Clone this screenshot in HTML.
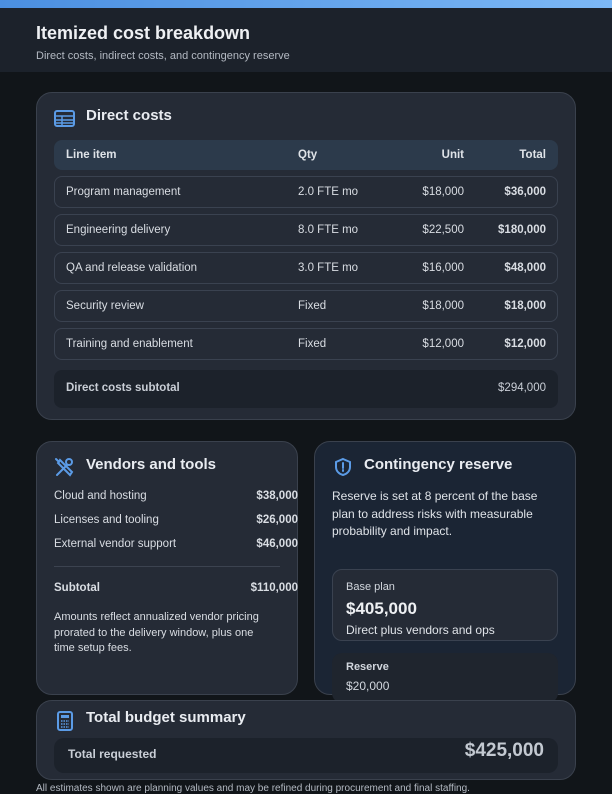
<!DOCTYPE html>
<html><head><style>
*{box-sizing:border-box;margin:0;padding:0}
body{width:612px;height:792px;overflow:hidden;background:#111519;font-family:"Liberation Sans",sans-serif;color:#e6e9ee;position:relative}
.a{position:absolute}
.card{position:absolute;background:#252b36;border:1px solid #3a414d;border-radius:16px}
.h{font-weight:bold;font-size:15px;color:#e9ecf1}
.row{position:absolute;left:54px;width:504px;height:32px;border:1px solid #3a4250;border-radius:8px;font-size:11.5px;color:#d9dde3}
.row span{position:absolute;top:9px}
.c1{left:11px}.c2{left:243px}.c3{right:93px}.c4{right:11px;font-weight:bold}
.vl{position:absolute;left:54px;font-size:11.5px;color:#d9dde3}
.vr{position:absolute;right:314px;font-size:11.5px;font-weight:bold;color:#d9dde3}
</style></head><body>
<div class="a" style="left:0;top:0;width:612px;height:8px;background:linear-gradient(90deg,#4b8fe0,#7cb8f6)"></div>
<div class="a" style="left:0;top:8px;width:612px;height:64px;background:#1c222b"></div>
<div class="a" style="left:36px;top:23px;font-size:18px;font-weight:bold;color:#eef0f3">Itemized cost breakdown</div>
<div class="a" style="left:36px;top:50px;font-size:11px;color:#b4bac3">Direct costs, indirect costs, and contingency reserve</div>

<div class="card" style="left:36px;top:92px;width:540px;height:328px"></div>
<svg class="a" style="left:54px;top:110px" width="21" height="17" viewBox="0 0 21 17"><rect x="1" y="1" width="19" height="15" rx="2" fill="none" stroke="#5b9be6" stroke-width="2"/><path d="M1 6H20M1 10H20M1 13H20M8 6V16" stroke="#5b9be6" stroke-width="1.5"/></svg>
<div class="a h" style="left:86px;top:107px">Direct costs</div>
<div class="a" style="left:54px;top:140px;width:504px;height:30px;background:#2c3a4b;border-radius:8px;font-size:11.5px;font-weight:bold;color:#dfe3e8">
<span class="a" style="left:12px;top:9px">Line item</span><span class="a" style="left:244px;top:9px">Qty</span><span class="a" style="right:94px;top:9px">Unit</span><span class="a" style="right:12px;top:9px">Total</span></div>
<div class="row" style="top:176px"><span class="c1">Program management</span><span class="c2">2.0 FTE mo</span><span class="c3">$18,000</span><span class="c4">$36,000</span></div>
<div class="row" style="top:214px"><span class="c1">Engineering delivery</span><span class="c2">8.0 FTE mo</span><span class="c3">$22,500</span><span class="c4">$180,000</span></div>
<div class="row" style="top:252px"><span class="c1">QA and release validation</span><span class="c2">3.0 FTE mo</span><span class="c3">$16,000</span><span class="c4">$48,000</span></div>
<div class="row" style="top:290px"><span class="c1">Security review</span><span class="c2">Fixed</span><span class="c3">$18,000</span><span class="c4">$18,000</span></div>
<div class="row" style="top:328px"><span class="c1">Training and enablement</span><span class="c2">Fixed</span><span class="c3">$12,000</span><span class="c4">$12,000</span></div>
<div class="a" style="left:54px;top:370px;width:504px;height:38px;background:#1c222b;border-radius:8px;font-size:11.5px;color:#c9ced6">
<span class="a" style="left:12px;top:12px;font-weight:bold">Direct costs subtotal</span><span class="a" style="right:12px;top:12px">$294,000</span></div>

<div class="card" style="left:36px;top:441px;width:262px;height:254px"></div>
<svg class="a" style="left:54px;top:457px" width="21" height="21" viewBox="0 0 21 21" fill="none" stroke="#5b9be6" stroke-width="2" stroke-linecap="round"><path d="M3 18L13 8M6 3L18 15l-2 3-12-12z"/><circle cx="15" cy="5" r="3"/><path d="M2 2l3 3"/></svg>
<div class="a h" style="left:86px;top:456px">Vendors and tools</div>
<div class="vl" style="top:490px">Cloud and hosting</div><div class="vr" style="top:490px">$38,000</div>
<div class="vl" style="top:514px">Licenses and tooling</div><div class="vr" style="top:514px">$26,000</div>
<div class="vl" style="top:538px">External vendor support</div><div class="vr" style="top:538px">$46,000</div>
<div class="a" style="left:54px;top:566px;width:226px;height:1px;background:#3c4350"></div>
<div class="vl" style="top:582px;font-weight:bold">Subtotal</div><div class="vr" style="top:582px">$110,000</div>
<div class="a" style="left:54px;top:610px;width:215px;font-size:11px;line-height:15.5px;color:#d9dde3">Amounts reflect annualized vendor pricing prorated to the delivery window, plus one time setup fees.</div>

<div class="card" style="left:314px;top:441px;width:262px;height:254px;background:#1b2534"></div>
<svg class="a" style="left:333px;top:457px" width="20" height="20" viewBox="0 0 20 20" fill="none" stroke="#5b9be6" stroke-width="2"><path d="M10 2l7 3v5c0 4-3 7-7 8-4-1-7-4-7-8V5z"/><path d="M10 6v5M10 13v1" stroke-linecap="round"/></svg>
<div class="a h" style="left:364px;top:456px">Contingency reserve</div>
<div class="a" style="left:332px;top:488px;width:230px;font-size:12px;line-height:17.5px;color:#dfe3e8">Reserve is set at 8 percent of the base plan to address risks with measurable probability and impact.</div>
<div class="a" style="left:332px;top:569px;width:226px;height:72px;border:1px solid #3a4250;border-radius:10px;background:#252b36"></div>
<div class="a" style="left:346px;top:581px;font-size:11px;color:#d2d7de">Base plan</div>
<div class="a" style="left:346px;top:599px;font-size:17px;font-weight:bold;color:#eef0f3">$405,000</div>
<div class="a" style="left:346px;top:623px;font-size:12px;color:#dfe3e8">Direct plus vendors and ops</div>
<div class="a" style="left:332px;top:653px;width:226px;height:50px;border-radius:10px;background:#1f252e"></div>
<div class="a" style="left:346px;top:661px;font-size:11px;font-weight:bold;color:#d2d7de">Reserve</div>
<div class="a" style="left:346px;top:679px;font-size:12px;color:#d2d7de">$20,000</div>

<div class="card" style="left:36px;top:700px;width:540px;height:80px"></div>
<svg class="a" style="left:57px;top:711px" width="16" height="20" viewBox="0 0 16 20"><rect x="1" y="1" width="14" height="18" rx="2" fill="none" stroke="#5b9be6" stroke-width="2"/><rect x="4" y="4" width="8" height="3" fill="#5b9be6"/><path d="M4 10h8M4 13h8M4 16h8" stroke="#5b9be6" stroke-width="1.5" stroke-dasharray="1.5 1"/></svg>
<div class="a h" style="left:86px;top:709px">Total budget summary</div>
<div class="a" style="left:54px;top:738px;width:504px;height:35px;background:#1c222b;border-radius:10px"></div>
<div class="a" style="left:68px;top:747px;font-size:12px;font-weight:bold;color:#c9ced6">Total requested</div>
<div class="a" style="right:68px;top:740px;font-size:19px;font-weight:bold;color:#c3c9d1">$425,000</div>
<div class="a" style="left:36px;top:783px;font-size:10px;color:#b4bac3;white-space:nowrap">All estimates shown are planning values and may be refined during procurement and final staffing.</div>
</body></html>
